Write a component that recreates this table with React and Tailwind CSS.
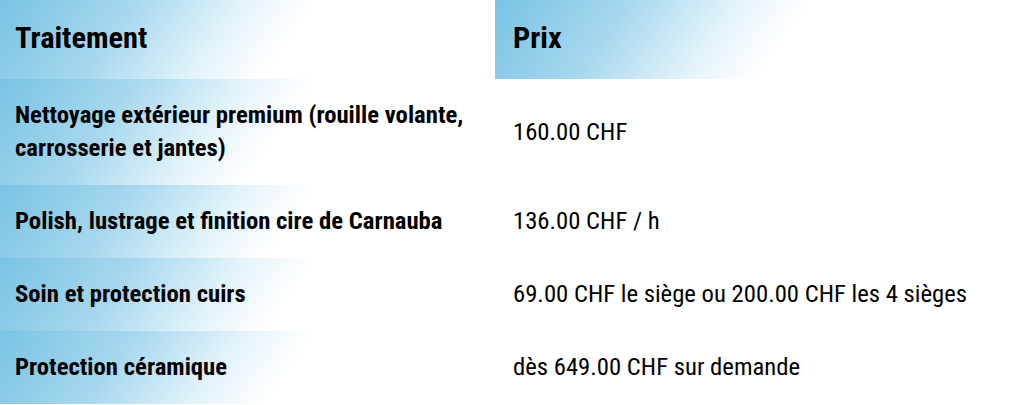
const rows = [
  ["Nettoyage extérieur premium (rouille volante, carrosserie et jantes)", "160.00 CHF"],
  ["Polish, lustrage et finition cire de Carnauba", "136.00 CHF / h"],
  ["Soin et protection cuirs", "69.00 CHF le siège ou 200.00 CHF les 4 sièges"],
  ["Protection céramique", "dès 649.00 CHF sur demande"],
];

const grad = "bg-[linear-gradient(125deg,#79c3e4_0px,#a6d7ee_110px,#e3f3fa_200px,#ffffff_260px)]";

export default function App() {
  return (
    <div className="w-[1024px] h-[405px] bg-white text-black overflow-hidden" style={{ fontFamily: '"Roboto Condensed", Roboto, sans-serif' }}>
      <table className="w-full border-collapse">
        <thead>
          <tr className="h-[79px]">
            <th className={`w-[495px] text-left align-middle pl-[15px] pb-[5px] text-[30.4px] font-bold leading-[39px] ${grad}`}>Traitement</th>
            <th className={`text-left align-middle pl-[18px] pb-[5px] text-[30.4px] font-bold leading-[39px] ${grad}`}>Prix</th>
          </tr>
        </thead>
        <tbody>
          {rows.map(([t, p], i) => (
            <tr key={i}>
              <td className={`pl-[15px] pr-4 pt-[19px] pb-[21px] text-[24.7px] font-bold leading-[33px] align-middle ${grad}`}>{t}</td>
              <td className="pl-[18px] pt-[19px] pb-[21px] text-[24.7px] leading-[33px] align-middle">{p}</td>
            </tr>
          ))}
        </tbody>
      </table>
    </div>
  );
}
